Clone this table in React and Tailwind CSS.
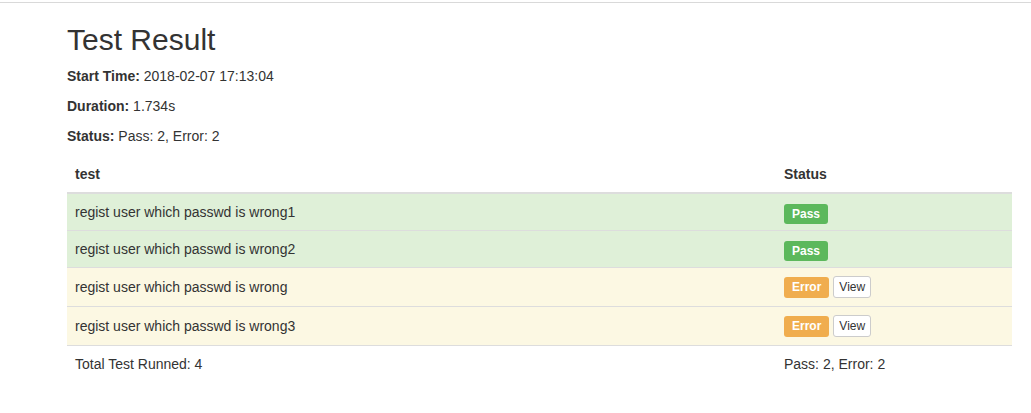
const results = [
    { name: 'regist user which passwd is wrong1', status: 'pass' },
    { name: 'regist user which passwd is wrong2', status: 'pass' },
    { name: 'regist user which passwd is wrong', status: 'error' },
    { name: 'regist user which passwd is wrong3', status: 'error' },
];

const App = () => {
    const passCount = results.filter(r => r.status === 'pass').length;
    const errorCount = results.filter(r => r.status === 'error').length;

    return (
        <div className="min-h-[413px] bg-white text-[14px] leading-[20px] text-[#333] font-['Liberation_Sans',Arial,sans-serif]">
            <div className="h-[2px]" />
            <div className="border-t border-[#d9d9d9]">
                <div className="ml-[67px] w-[945px]">
                    <h1 className="mt-[20px] mb-[10px] text-[30px] leading-[33px] font-normal">Test Result</h1>
                    <p className="mb-[10px]"><strong>Start Time:</strong> 2018-02-07 17:13:04</p>
                    <p className="mb-[10px]"><strong>Duration:</strong> 1.734s</p>
                    <p className="mb-[10px]"><strong>Status:</strong> Pass: {passCount}, Error: {errorCount}</p>

                    <table className="w-full border-collapse">
                        <thead>
                            <tr>
                                <th className="p-[8px] text-left align-bottom font-bold border-b-2 border-[#ddd]">test</th>
                                <th className="w-[236px] p-[8px] text-left align-bottom font-bold border-b-2 border-[#ddd]">Status</th>
                            </tr>
                        </thead>
                        <tbody>
                            {results.map((r, i) => (
                                <tr key={i} className={r.status === 'pass' ? 'bg-[#dff0d8]' : 'bg-[#fcf8e3]'}>
                                    <td className="p-[8px] align-middle border-t border-[#ddd]">{r.name}</td>
                                    <td className="p-[8px] align-middle border-t border-[#ddd]">
                                        {r.status === 'pass' ? (
                                            <div className="flex h-[20px] items-start">
                                                <span className="mt-[2px] rounded-[3px] bg-[#5cb85c] px-[8px] py-[3px] text-[12px] leading-[14px] font-bold text-white">Pass</span>
                                            </div>
                                        ) : (
                                            <div className="flex h-[22px] items-center gap-[4px]">
                                                <span className="rounded-[3px] bg-[#f0ad4e] px-[8px] py-[3px] text-[12px] leading-[15px] font-bold text-white">Error</span>
                                                <button className="rounded-[3px] border border-[#ccc] bg-white px-[5px] py-[1px] text-[12px] leading-[18px] text-[#333]">View</button>
                                            </div>
                                        )}
                                    </td>
                                </tr>
                            ))}
                            <tr>
                                <td className="p-[8px] border-t border-[#ddd]">Total Test Runned: {results.length}</td>
                                <td className="p-[8px] border-t border-[#ddd]">Pass: {passCount}, Error: {errorCount}</td>
                            </tr>
                        </tbody>
                    </table>
                </div>
            </div>
        </div>
    );
};

export default App;
